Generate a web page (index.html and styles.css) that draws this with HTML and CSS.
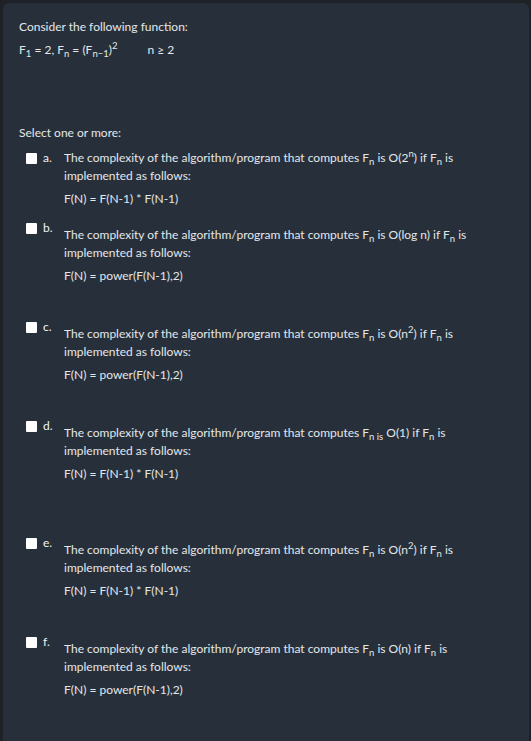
FILE: index.html
```html
<!DOCTYPE html>
<html lang="en">
<head>
<meta charset="utf-8">
<title>Question</title>
<link rel="stylesheet" href="styles.css">
</head>
<body>
<div class="panel">
  <div class="qtext">
    <p>Consider the following function:</p>
    <p>F<sub>1</sub> = 2, F<sub>n</sub> = (F<sub>n−1</sub>)<sup>2</sup><span class="cond">n ≥ 2</span></p>
  </div>
  <div class="prompt">Select one or more:</div>
  <div class="answers">
    <div class="opt">
      <span class="box"></span><span class="letter">a.</span>
      <div class="body">
        <p>The complexity of the algorithm/program that computes F<sub>n</sub> is O(2<sup>n</sup>) if F<sub>n</sub> is implemented as follows:</p>
        <p>F(N) = F(N-1) * F(N-1)</p>
      </div>
    </div>
    <div class="opt drop sp1">
      <span class="box"></span><span class="letter">b.</span>
      <div class="body">
        <p>The complexity of the algorithm/program that computes F<sub>n</sub> is O(log n) if F<sub>n</sub> is implemented as follows:</p>
        <p>F(N) = power(F(N-1),2)</p>
      </div>
    </div>
    <div class="opt drop sp1">
      <span class="box"></span><span class="letter">c.</span>
      <div class="body">
        <p>The complexity of the algorithm/program that computes F<sub>n</sub> is O(n<sup>2</sup>) if F<sub>n</sub> is implemented as follows:</p>
        <p>F(N) = power(F(N-1),2)</p>
      </div>
    </div>
    <div class="opt drop sp2">
      <span class="box"></span><span class="letter">d.</span>
      <div class="body">
        <p>The complexity of the algorithm/program that computes F<sub>n is</sub> O(1) if F<sub>n</sub> is implemented as follows:</p>
        <p>F(N) = F(N-1) * F(N-1)</p>
      </div>
    </div>
    <div class="opt drop sp1">
      <span class="box"></span><span class="letter">e.</span>
      <div class="body">
        <p>The complexity of the algorithm/program that computes F<sub>n</sub> is O(n<sup>2</sup>) if F<sub>n</sub> is implemented as follows:</p>
        <p>F(N) = F(N-1) * F(N-1)</p>
      </div>
    </div>
    <div class="opt drop">
      <span class="box"></span><span class="letter">f.</span>
      <div class="body">
        <p>The complexity of the algorithm/program that computes F<sub>n</sub> is O(n) if F<sub>n</sub> is implemented as follows:</p>
        <p>F(N) = power(F(N-1),2)</p>
      </div>
    </div>
  </div>
</div>
</body>
</html>
```
FILE: styles.css
```css
html, body {
  margin: 0;
  padding: 0;
  height: 100%;
}
body {
  background: #1e2226;
  font-family: Lato, "Liberation Sans", sans-serif;
  font-size: 12px;
  color: #e4e7ea;
  padding: 3px 2px 0 3px;
  box-sizing: border-box;
}
.panel {
  background: #27303a;
  border-radius: 6px 6px 0 0;
  min-height: 100%;
  box-sizing: border-box;
  padding: 15px 24px 20px 16px;
}
p {
  margin: 0;
  line-height: 18px;
}
.qtext p + p {
  margin-top: 5px;
}
sub, sup {
  font-size: 9.5px;
  line-height: 0;
  position: relative;
}
sub {
  vertical-align: baseline;
  top: 3px;
}
sup {
  vertical-align: baseline;
  top: -5px;
}
.cond {
  margin-left: 30px;
}
.prompt {
  margin-top: 65px;
  line-height: 18px;
}
.answers {
  margin-top: 7px;
  display: flex;
  flex-direction: column;
}
.opt {
  display: flex;
  align-items: flex-start;
  padding-left: 7px;
  margin-bottom: 11px;
}
.opt.sp1 {
  margin-bottom: 33px;
}
.opt.sp2 {
  margin-bottom: 51px;
}
.box {
  flex: none;
  width: 11px;
  height: 11px;
  margin-top: 4px;
  background: #ffffff;
  border-radius: 1px;
}
.letter {
  flex: none;
  width: 21px;
  margin-left: 6px;
  line-height: 18px;
  color: #f0f2f4;
}
.body {
  flex: 1;
  min-width: 0;
}
.opt.drop .body {
  margin-top: 7px;
}
.body p + p {
  margin-top: 5px;
}
```
